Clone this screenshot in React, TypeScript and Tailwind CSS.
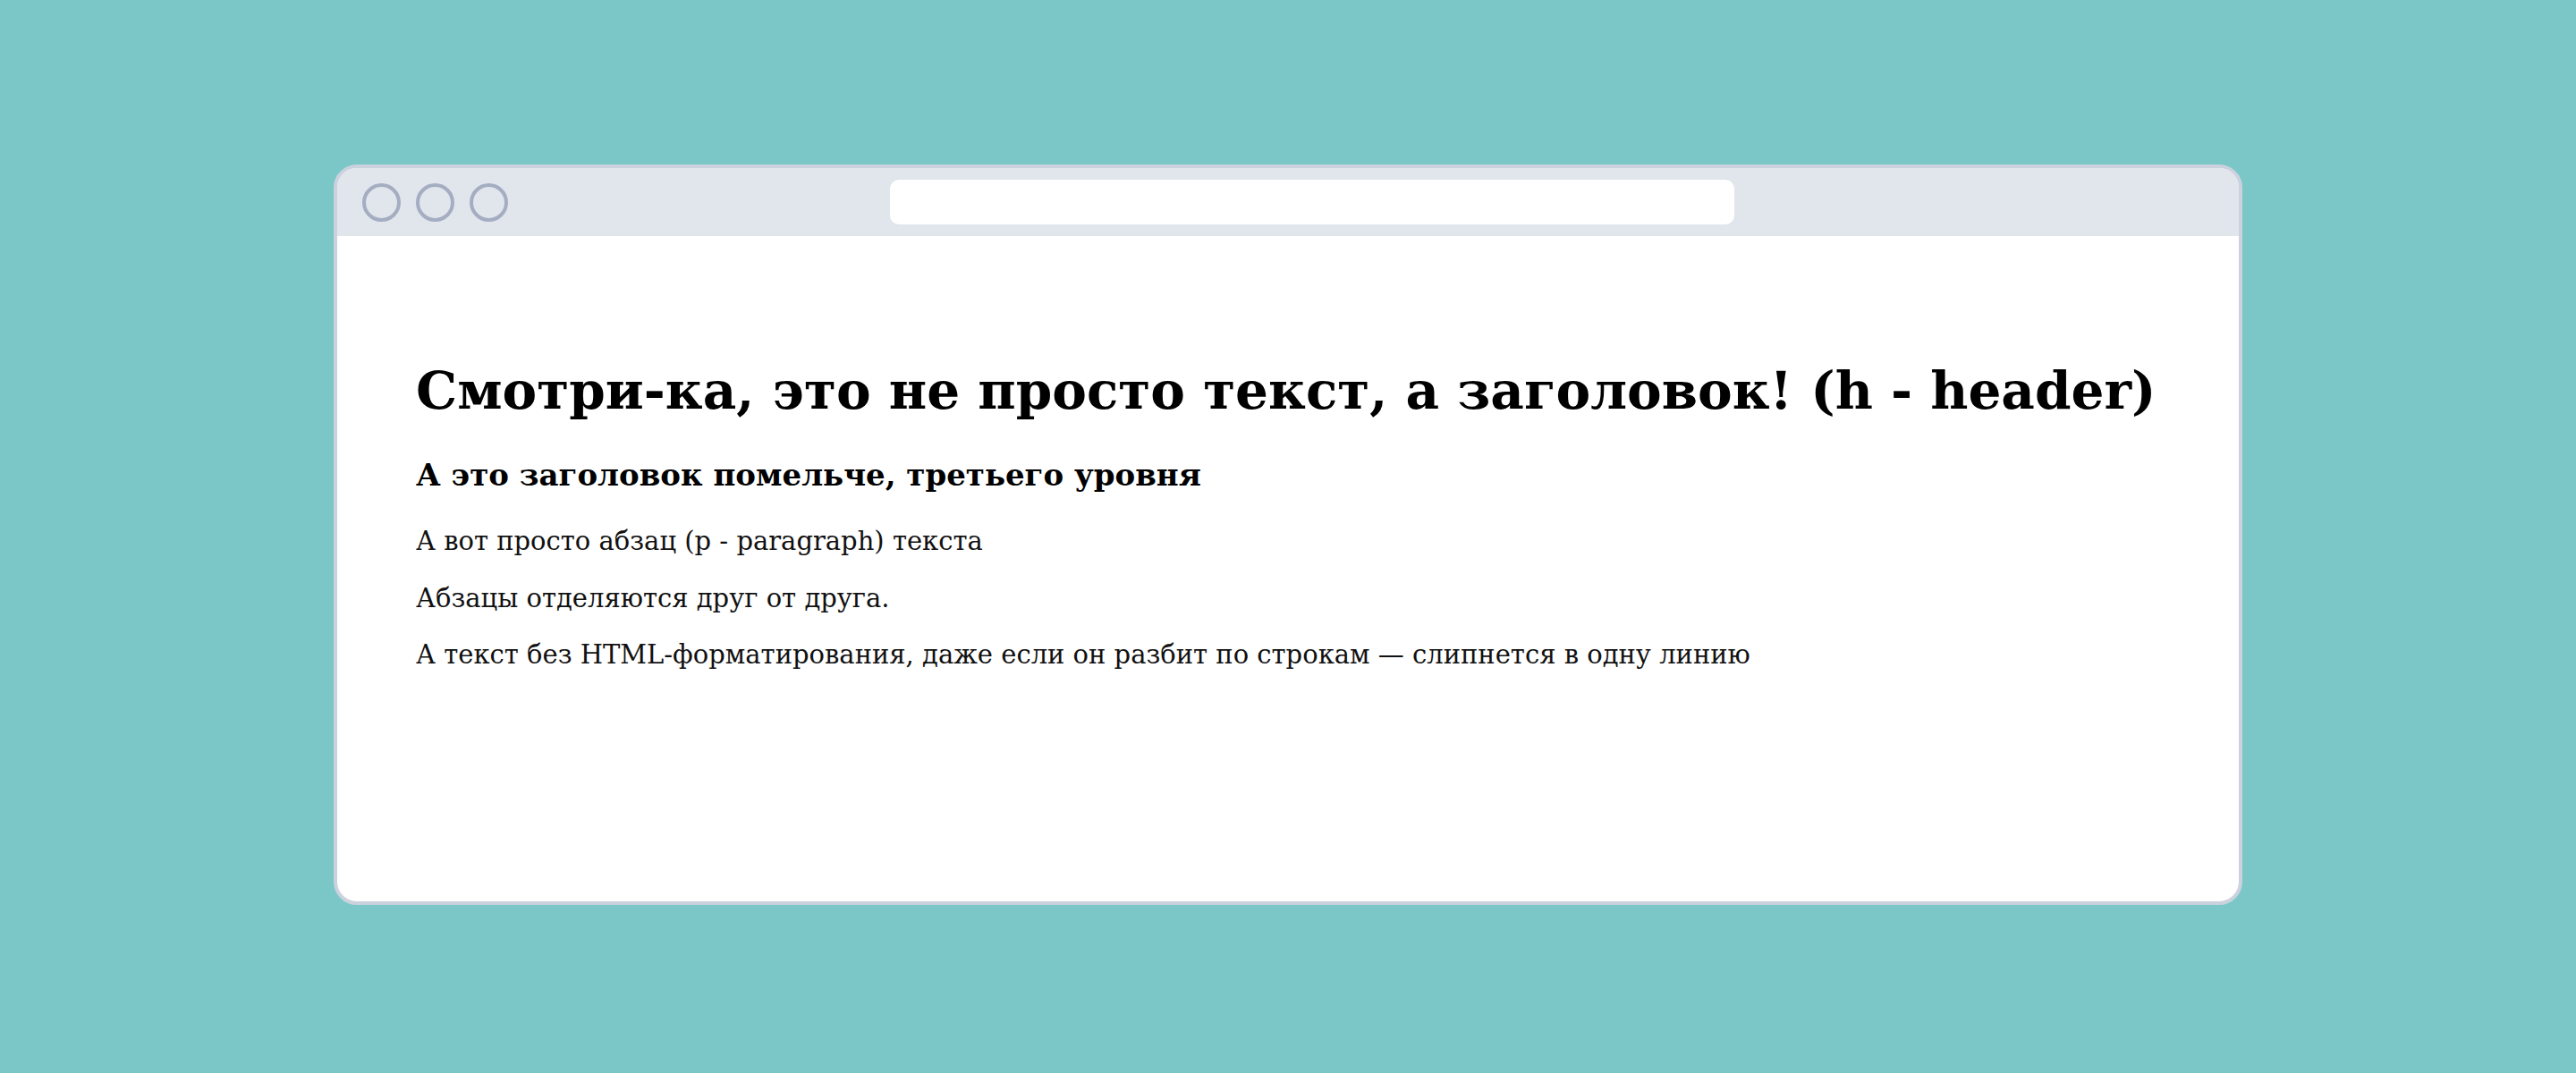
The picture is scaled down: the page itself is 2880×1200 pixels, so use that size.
export default function App() {
  const serif = { fontFamily: '"DejaVu Serif", "Liberation Serif", serif' }

  return (
    <div className="w-full h-screen bg-[#7bc7c8] flex items-center justify-center pb-1">
      <div className="w-[2134px] h-[828px] bg-white border-4 border-[#cbd2de] rounded-[26px] overflow-hidden flex flex-col">
        {/* title bar */}
        <div className="h-[76px] shrink-0 bg-[#e1e5ec] flex items-center pl-[28px]">
          <div className="flex gap-[17px]">
            <div className="w-[43px] h-[43px] rounded-full border-4 border-[#a5adc2]" />
            <div className="w-[43px] h-[43px] rounded-full border-4 border-[#a5adc2]" />
            <div className="w-[43px] h-[43px] rounded-full border-4 border-[#a5adc2]" />
          </div>
          <div className="ml-[427px] w-[944px] h-[50px] bg-white rounded-[10px]" />
        </div>

        {/* page */}
        <div className="pt-[139px] pl-[88px] text-black" style={serif}>
          <h1 className="text-[58px] leading-[68px] font-bold">
            Смотри-ка, это не просто текст, а заголовок! (h - header)
          </h1>
          <h3 className="mt-[40px] text-[34px] leading-[40px] font-bold">
            А это заголовок помельче, третьего уровня
          </h3>
          <p className="mt-[37px] text-[29px] leading-[34px] text-[#111]">
            А вот просто абзац (p - paragraph) текста
          </p>
          <p className="mt-[30px] text-[29px] leading-[34px] text-[#111]">
            Абзацы отделяются друг от друга.
          </p>
          <p className="mt-[29px] text-[29px] leading-[34px] text-[#111]">
            А текст без HTML-форматирования, даже если он разбит по строкам — слипнется в одну линию
          </p>
        </div>
      </div>
    </div>
  )
}
